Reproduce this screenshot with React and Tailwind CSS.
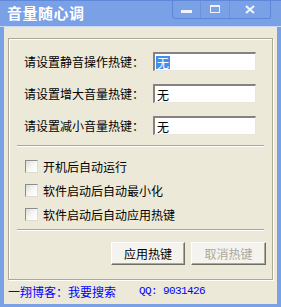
import React from "react";

const font = { fontFamily: '"Noto Sans CJK SC", "Noto Sans", sans-serif' };

function HotkeyRow({ label, selected }) {
  return (
    <div className="flex items-center h-[19px]">
      <span className="w-[129px] text-[12px] leading-none text-black whitespace-nowrap">{label}</span>
      <div className="w-[103px] h-[19px] bg-white border-t-2 border-l-2 border-b border-r border-t-[#848284] border-l-[#848284] border-b-[#e8e6dc] border-r-[#e8e6dc] flex items-center pl-[1px]">
        <span
          className={
            selected
              ? "bg-[#3d8ff0] text-white text-[12px] leading-[13px] px-[1px]"
              : "text-black text-[12px] leading-[13px] px-[1px]"
          }
        >
          无
        </span>
      </div>
    </div>
  );
}

function Check({ label }) {
  return (
    <div className="flex items-center h-[13px] gap-[5px]">
      <div className="w-[13px] h-[13px] border border-t-[#8c8c8c] border-l-[#8c8c8c] border-b-[#e0ddd0] border-r-[#e0ddd0] bg-gradient-to-br from-[#dcdcd6] via-[#f6f6f4] to-white" />
      <span className="text-[12px] leading-none text-black whitespace-nowrap">{label}</span>
    </div>
  );
}

function Etch() {
  return <div className="mx-[8px] h-[2px] border-t border-t-[#aca899] border-b border-b-white" />;
}

export default function App() {
  return (
    <div className="w-[281px] h-[307px] flex flex-col bg-[#7aa0e6]" style={font}>
      {/* title bar */}
      <div className="h-[26px] flex items-start relative border-t border-t-[#5f88d8]">
        <span className="ml-[7px] mt-[3px] text-[15px] leading-[18px] font-bold text-white tracking-[0.5px]">
          音量随心调
        </span>
        <div className="absolute left-[172px] top-0 w-[99px] h-[18px] flex border-l border-b border-r border-[#5c86d8] rounded-bl-[4px] rounded-br-[2px]">
          <div className="w-[28px] h-full border-r border-[#6a92de] flex items-center justify-center">
            <div className="w-[11px] h-[3px] bg-[#eef3fd] mt-[4px]" />
          </div>
          <div className="w-[29px] h-full border-r border-[#6a92de] flex items-center justify-center">
            <div className="w-[10px] h-[8px] border border-t-2 border-[#eef3fd] mb-[1px]" />
          </div>
          <div className="flex-1 flex items-center justify-center">
            <svg width="10" height="9" viewBox="0 0 10 9">
              <path d="M1 1 L9 8 M9 1 L1 8" stroke="#eef3fd" strokeWidth="2.2" />
            </svg>
          </div>
        </div>
      </div>
      <div className="h-[1px] bg-[#c9d8f6]" />
      {/* body */}
      <div className="flex-1 mx-[4px] mb-[3px] bg-[#ece9d8] flex flex-col px-[4px] pt-[11px]">
        <div className="h-[242px] border border-[#aca899] shadow-[inset_1px_1px_0_#fff,1px_1px_0_#fff] flex flex-col">
          <div className="pl-[15px] pt-[13px] flex flex-col gap-[13px]">
            <HotkeyRow label="请设置静音操作热键：" selected />
            <HotkeyRow label="请设置增大音量热键：" />
            <HotkeyRow label="请设置减小音量热键：" />
          </div>
          <div className="mt-[10px]">
            <Etch />
          </div>
          <div className="pl-[16px] pt-[13px] flex flex-col gap-[11px]">
            <Check label="开机后自动运行" />
            <Check label="软件启动后自动最小化" />
            <Check label="软件启动后自动应用热键" />
          </div>
          <div className="mt-[8px]">
            <Etch />
          </div>
          <div className="flex justify-end gap-[6px] pr-[6px] pt-[11px]">
            <button className="w-[74px] h-[23px] bg-[#f4f3ee] border border-t-white border-l-white border-b-[#716f64] border-r-[#716f64] shadow-[inset_-1px_-1px_0_#aca899] text-[12px] leading-none text-black">
              应用热键
            </button>
            <button className="w-[75px] h-[23px] bg-[#f4f3ee] border border-t-white border-l-white border-b-[#716f64] border-r-[#716f64] shadow-[inset_-1px_-1px_0_#aca899] text-[12px] leading-none text-[#aca899]">
              取消热键
            </button>
          </div>
        </div>
        <div className="flex items-center h-[23px] text-[12px] leading-none text-[#0000ff] whitespace-nowrap">
          <span className="w-[131px]">一翔博客：我要搜索</span>
          <span className="text-[11px] tracking-[-0.6px]" style={{ fontFamily: '"Liberation Mono", monospace' }}>
            QQ: 9031426
          </span>
        </div>
      </div>
    </div>
  );
}
